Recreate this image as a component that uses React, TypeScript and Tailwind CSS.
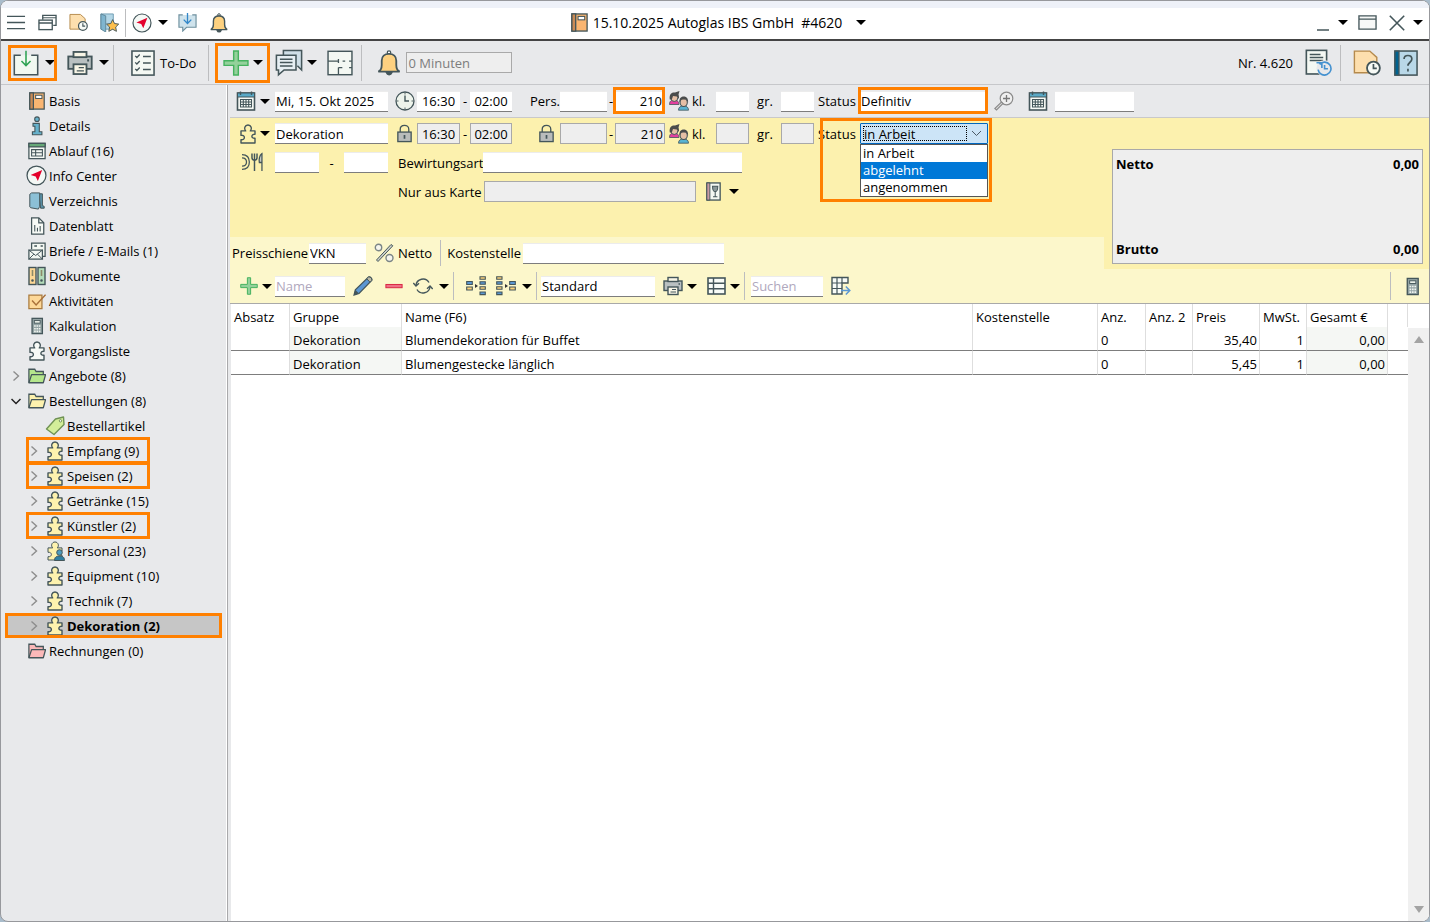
import React from "react";
import clsx from "clsx";

const INK = "#44565a";

type IconProps = { size?: number; className?: string };

function Svg({
  size = 20,
  className,
  children,
}: IconProps & { children: React.ReactNode }) {
  return (
    <svg
      width={size}
      height={size}
      viewBox="0 0 20 20"
      fill="none"
      stroke={INK}
      strokeWidth={1.4}
      aria-hidden="true"
      className={clsx("shrink-0", className)}
    >
      {children}
    </svg>
  );
}

function Arrow({ className }: { className?: string }) {
  return (
    <svg width="10" height="5" viewBox="0 0 10 5" aria-hidden="true" className={clsx("shrink-0", className)}>
      <path d="M0 0h10L5 5z" fill="#000" />
    </svg>
  );
}

const MenuIcon = (p: IconProps) => (
  <Svg {...p}>
    <path d="M0 3.5h19M0 10h19M0 16.500h19" />
  </Svg>
);

const WindowsIcon = (p: IconProps) => (
  <Svg {...p}>
    <path d="M5 7V2.5h14V13h-3" />
    <path d="M5 5h14" strokeWidth={1} />
    <rect x="1" y="7.5" width="14" height="10" fill="#fff" />
    <path d="M1 10.5h14" />
  </Svg>
);

const NoteClockIcon = (p: IconProps) => (
  <Svg {...p}>
    <path d="M1 1.5h11l5 4.500v11H1z" fill="#fddfae" stroke="#b58a4c" strokeWidth={1} />
    <circle cx="14.6" cy="13.6" r="4.6" fill="#f7faf6" strokeWidth={1.3} />
    <path d="M14.6 10.8v3h2.4" strokeWidth={1.2} />
  </Svg>
);

const StarBookIcon = (p: IconProps) => (
  <Svg {...p}>
    <path d="M1 1h13v16H1z" fill="#b3d6e6" stroke="#6f9db3" strokeWidth={1} />
    <path d="M1 1l5 2v17l-5-3z" fill="#7fb5cf" stroke="#5f8799" strokeWidth={1} />
    <path
      d="M13.3 7l2 4.1 4.4.6-3.2 3.1.8 4.5-4-2.2-4 2.2.8-4.5-3.2-3.1 4.4-.6z"
      fill="#fdbf4d"
      strokeWidth={1}
    />
  </Svg>
);

const CompassIcon = (p: IconProps) => (
  <Svg {...p}>
    <circle cx="10" cy="10" r="9" fill="#f4f8f5" strokeWidth={1.2} />
    <path d="M15.4 4.8L11.3 15.2 9.2 11 4.4 9.5z" fill="#e4002b" stroke="none" />
  </Svg>
);

const ChatInIcon = (p: IconProps) => (
  <Svg {...p}>
    <path d="M5 2H1v13h4v4l4-4h10V2h-4" fill="#cfe3ec" stroke="#6d8f9d" strokeWidth={1.2} />
    <path d="M10 0v10M6 7l4 4 4-4" stroke="#3287c9" />
  </Svg>
);

const BellIcon = (p: IconProps) => (
  <Svg {...p}>
    <path d="M8.2 17.5a2 2 0 003.8 0z" fill="#f2b84b" />
    <circle cx="10" cy="2" r="1.3" fill="#fff" strokeWidth={1} />
    <path
      d="M1.8 16.6c2-1 2.6-2.4 2.6-5.1V8.2C4.4 5 6.6 3 10 3s5.6 2 5.6 5.2v3.3c0 2.7.6 4.1 2.6 5.1z"
      fill="#fdd180"
    />
  </Svg>
);

const BookIcon = (p: IconProps) => (
  <Svg {...p}>
    <rect x="2" y="1" width="16" height="18" fill="#f9b571" />
    <path d="M2 1h4v18H2z" fill="#c98a55" />
    <rect x="8.5" y="3.6" width="7" height="3.6" fill="#fff" strokeWidth={1.1} />
  </Svg>
);

const InfoIcon = (p: IconProps) => (
  <Svg {...p}>
    <circle cx="10" cy="3.2" r="2.3" fill="#67b2cc" strokeWidth={1.1} />
    <path d="M6 7.4h6.3v8.4h2.6v3H5.4v-3h2.5v-5.5H6z" fill="#67b2cc" strokeWidth={1.1} />
  </Svg>
);

const PlanIcon = (p: IconProps) => (
  <Svg {...p}>
    <rect x="1" y="1.5" width="18" height="17" fill="#f4f8f3" />
    <path d="M1 1.5h18v4H1z" fill="#65a877" />
    <path d="M4 8.5h12v7H4zM4 12h12M8.5 8.5v7" strokeWidth={1.2} />
  </Svg>
);

const DirectoryIcon = (p: IconProps) => (
  <Svg {...p}>
    <path d="M12 2h4v13l2 1v2h-4z" fill="#5a93ab" strokeWidth={1.1} />
    <path d="M2 2.5L4 1h9v15l-1.5 3L3 17.5l-1-1z" fill="#8cc0d6" strokeWidth={1.1} />
  </Svg>
);

const SheetIcon = (p: IconProps) => (
  <Svg {...p}>
    <path d="M4 1h8l5.5 5.5V19H4z" fill="#f7faf6" />
    <path d="M12 1v5.5h5.5" />
    <path d="M7.5 16V9M10.5 16v-4M13.5 16v-6" strokeWidth={1.2} />
  </Svg>
);

const MailIcon = (p: IconProps) => (
  <Svg {...p}>
    <path d="M4 8V1.2h15V16h-3" fill="#f4f8f3" />
    <path d="M7 4.5h3M14 4.5h2.5" strokeWidth={1.8} />
    <rect x="1" y="9" width="15" height="10" fill="#f4f8f3" />
    <path d="M1 9l7.5 6L16 9M1 19l5.5-5.5M16 19l-5.5-5.5" strokeWidth={1.1} />
  </Svg>
);

const BindersIcon = (p: IconProps) => (
  <Svg {...p}>
    <rect x="2" y="1.5" width="7" height="17" fill="#fcd795" />
    <rect x="11" y="1.5" width="7" height="17" fill="#b4dcb9" />
    <path d="M5.5 4v6M14.5 4v6" strokeWidth={1.6} stroke="#8d8a68" />
    <circle cx="5.5" cy="14.5" r=".6" />
    <circle cx="14.5" cy="14.5" r=".6" />
  </Svg>
);

const TaskIcon = (p: IconProps) => (
  <Svg {...p}>
    <path d="M1 3.5h14.5v15H1z" fill="#fdd898" stroke="#a97b3f" />
    <path d="M4.5 9.5l4.500 5L19.5 3" stroke="#a9713a" strokeWidth={1.6} />
  </Svg>
);

const CalculatorIcon = (p: IconProps) => (
  <Svg {...p}>
    <rect x="4.5" y="1.5" width="11.5" height="17" fill="#93a3a4" />
    <rect x="7" y="4" width="6.5" height="2.8" fill="#edf3ec" strokeWidth={1} />
    <path
      d="M6.8 10h1.8M9.4 10h1.8M12 10h1.8M6.8 13h1.8M9.4 13h1.8M12 13h1.8M6.8 16h1.8M9.4 16h1.8M12 16h1.8"
      stroke="#f0f4ef"
      strokeWidth={1.8}
    />
  </Svg>
);

const PUZZLE =
  "M7.7 6.9C5.6 4.9 6.7 1 10 1s4.4 3.900 2.300 5.900H17v3.300c-4-.4-4.300 4.400 0 4V19H3v-3.300c4.500.6 4.500-5 0-4.400V6.900z";

const PuzzleIcon = ({ fill = "#fdf2ae", ...p }: IconProps & { fill?: string }) => (
  <Svg {...p}>
    <path d={PUZZLE} fill={fill} strokeLinejoin="round" />
  </Svg>
);

const PuzzlePersonIcon = (p: IconProps) => (
  <Svg {...p}>
    <path d={PUZZLE} fill="#fdf2ae" strokeWidth={1} strokeLinejoin="round" />
    <circle cx="14.5" cy="11.5" r="2.8" fill="#4c9cc0" strokeWidth={1} />
    <path d="M9.5 19.5c0-3.500 2-4.500 5-4.500s5 1 5 4.500z" fill="#2f7fa3" strokeWidth={1} />
  </Svg>
);

const FolderIcon = ({ fill = "#fdf2ae", ...p }: IconProps & { fill?: string }) => (
  <Svg {...p}>
    <path d="M1 17.5V2.5h6.500l1.500 2.500H17v3.500" fill={fill} />
    <path d="M1 17.5L4 8.500h15.500L17 17.500z" fill={fill} strokeLinejoin="round" />
  </Svg>
);

const TagIcon = (p: IconProps) => (
  <Svg {...p}>
    <path d="M10.5 3L18.500 1l.5 7.500-10 10L1.500 13z" fill="#d3ee99" stroke="#6f9254" strokeLinejoin="round" />
    <circle cx="15.5" cy="4.8" r="1.2" fill="#fff" stroke="#6f9254" strokeWidth={1} />
  </Svg>
);

const InboxIcon = (p: IconProps) => (
  <Svg {...p}>
    <path d="M6 4H1v15h18V4h-5" fill="#f1f8f1" strokeWidth={1.2} />
    <path d="M10 .5v11M6.500 8.500L10 12l3.500-3.500" stroke="#2fa354" strokeWidth={1.2} />
  </Svg>
);

const PrinterIcon = (p: IconProps) => (
  <Svg {...p}>
    <rect x="1" y="5" width="18" height="9.5" fill="#b9c0c1" />
    <rect x="5" y="1.5" width="10" height="4" fill="#f8f5e6" />
    <path d="M15.500 8h1.500" strokeWidth={1.6} />
    <rect x="5" y="11" width="10" height="7.5" fill="#f8f5e6" />
    <path d="M9 13.500h4M7.500 16h5.500" strokeWidth={1} />
  </Svg>
);

const ChecklistIcon = (p: IconProps) => (
  <Svg {...p}>
    <rect x="1.5" y=".8" width="17" height="18.5" fill="#f4f8f3" strokeWidth={1.2} />
    <path
      d="M4 4.500l1.300 1.300L7.500 3.500M4 9.500l1.300 1.300L7.500 8.500M4 14.500l1.300 1.300 2.200-2.300M10 5h6M10 10h6M10 15h6"
      strokeWidth={1}
    />
  </Svg>
);

const PlusIcon = (p: IconProps) => (
  <Svg {...p}>
    <path
      d="M8.200.8h3.600v7.400h7.400v3.600h-7.400v7.400H8.200v-7.400H.8V8.200h7.400z"
      fill="#94d19b"
      stroke="#45b25f"
      strokeWidth={1.1}
    />
  </Svg>
);

const ChatsIcon = (p: IconProps) => (
  <Svg {...p}>
    <path d="M6 5V1h13v14l-3-3" fill="#cfdfe7" strokeWidth={1.1} />
    <path d="M1 4.500h14V15H6.500l-4 3.500V15H1z" fill="#e6eff3" strokeWidth={1.1} />
    <path d="M3.500 7.300h9M3.500 9.700h9M3.500 12.200h9" strokeWidth={1.1} />
  </Svg>
);

const FloorIcon = (p: IconProps) => (
  <Svg {...p}>
    <rect x=".8" y="1" width="18.400" height="18" fill="#f4f8f3" strokeWidth={1.1} />
    <path d="M.8 8.500h8M8.800 7v3M12 8.500h2M17 8.500h2.200M8.800 19v-5.500M8.800 13.500h3M17 13.500h2.200" strokeWidth={1} />
  </Svg>
);

const HistoryIcon = (p: IconProps) => (
  <Svg {...p}>
    <rect x="1" y="1" width="15" height="17.500" fill="#f4f8f3" strokeWidth={1.2} />
    <path d="M3.500 4h8M3.500 6.300h10M3.500 8.600h10" strokeWidth={1.1} />
    <circle cx="14.500" cy="14.300" r="6" fill="#e8e9eb" stroke="none" />
    <path d="M10.800 11.400a4.800 4.800 0 11-1.100 3.900M8.500 10.200l4-.2v4" stroke="#4592d0" strokeWidth={1.2} />
    <path d="M14.500 11.800v2.800H17" stroke="#4592d0" strokeWidth={1.2} />
  </Svg>
);

const HelpIcon = (p: IconProps) => (
  <Svg {...p}>
    <rect x="1.500" y=".8" width="17" height="18.500" fill="#b9d8e8" strokeWidth={1.2} />
    <path d="M1.500.8h3.100v18.500H1.500z" fill="#00628f" strokeWidth={1} />
    <path d="M8.500 7C8.500 3.300 14.500 3.300 14.500 7c0 2.400-3 2.500-3 5.200M11.500 14.500v2" strokeWidth={1.3} />
  </Svg>
);

const CalendarIcon = (p: IconProps) => (
  <Svg {...p}>
    <rect x="1.500" y="2" width="17" height="17" fill="#f7faf6" strokeWidth={1.6} />
    <path d="M1.500 2h17v4h-17z" fill="#5aa9c6" strokeWidth={1} />
    <path d="M4.500.5V4M15.500.5V4" />
    <path
      d="M4.500 8.500h11V16h-11zM4.500 11h11M4.500 13.500h11M7.300 8.500V16M10 8.500V16M12.700 8.500V16"
      strokeWidth={1.1}
    />
  </Svg>
);

const ClockIcon = (p: IconProps) => (
  <Svg {...p}>
    <circle cx="10" cy="10" r="9" fill="#eef4ec" strokeWidth={1.3} />
    <path d="M10 4.500V10h4" />
    <path d="M10 1.500v2M10 16.500v2M1.500 10h2M16.500 10h2" strokeWidth={0.9} />
  </Svg>
);

const LockIcon = (p: IconProps) => (
  <Svg {...p}>
    <path d="M5.500 8.500v-3c0-5.500 9-5.500 9 0v3" />
    <rect x="3" y="8.500" width="14" height="10" fill="#b9bcbb" />
    <path d="M10 11.500v4" strokeWidth={1.8} />
  </Svg>
);

const PeopleIcon = (p: IconProps) => (
  <Svg {...p}>
    <path d="M.5 13.500c0-3.500 2-4.500 4.500-4.500s5 1 5 4.500z" fill="#e3409f" strokeWidth={0.8} />
    <ellipse cx="5.300" cy="6.500" rx="3.600" ry="4" fill="#e5bfa5" strokeWidth={1} />
    <path
      d="M.8 8.500C0 3 2.500 1 6 1.500L10.500 0 9.500 3.500c.6 2 .5 3 .5 4.500L7.800 5.500 4 5 2.800 8.500z"
      fill="#4a4c4c"
      stroke="none"
    />
    <path d="M9.500 19.200c0-3.200 2-4.200 5-4.200s5 1 5 4.200z" fill="#58b3d2" strokeWidth={0.8} />
    <ellipse cx="14.700" cy="11.500" rx="3.600" ry="4" fill="#e5bfa5" strokeWidth={1.1} />
    <path d="M10.300 11.500C10 7 12.500 5.500 14.700 5.500s4.800 1.500 4.400 6L17 8.500h-4.500z" fill="#4a4c4c" stroke="none" />
  </Svg>
);

const ZoomIcon = (p: IconProps) => (
  <Svg {...p}>
    <circle cx="12.500" cy="7.500" r="6.300" fill="#efefef" stroke="#8b8b8b" strokeWidth={1.2} />
    <path d="M12.500 4v7M9 7.500h7" stroke="#777" strokeWidth={1.3} />
    <path d="M7.500 11L9 12.500 2.500 19 .8 17.500z" fill="#ddd" stroke="#8b8b8b" strokeWidth={1.1} />
  </Svg>
);

const CutleryIcon = (p: IconProps) => (
  <Svg {...p}>
    <path d="M0 2.500c5 0 7 3 7 7s-2 7-7 7M0 5.500c3 0 4.300 1.500 4.300 4s-1.300 4-4.300 4" strokeWidth={1.2} />
    <path d="M9.500 1.500v4c0 3 4.800 3 4.800 0v-4M11.900 1.500V18" />
    <path d="M19 18V1.500c-2.500 1.500-3 6-2.500 8.500H19" fill="#c7cac6" strokeWidth={1.2} />
  </Svg>
);

const WineCardIcon = (p: IconProps) => (
  <Svg {...p}>
    <rect x="3" y="1" width="14" height="18" fill="#f4f8f3" />
    <path d="M3 1h3.200v18H3z" fill="#c99aa5" strokeWidth={1} />
    <path
      d="M9 4.500h5.500c0 5-1 5.500-2.700 5.500S9 9.500 9 4.500zM11.800 10v5M9.500 15.500h4.600"
      fill="#8a9799"
      strokeWidth={1.1}
    />
  </Svg>
);

const PercentIcon = (p: IconProps) => (
  <Svg {...p}>
    <path d="M17 1.500l1.800 1.300L4 18.500 2.500 17z" fill="#cfd2cb" strokeWidth={1} />
    <circle cx="4.500" cy="4.500" r="3.200" fill="#f6f6ee" stroke="#7b8586" />
    <circle cx="15.500" cy="15" r="3.500" fill="#f6f6ee" stroke="#7b8586" />
  </Svg>
);

const PencilIcon = (p: IconProps) => (
  <Svg {...p}>
    <path d="M15.500 1c2-.5 4 1.500 3.200 3.500L6 17.500 1 19l1.300-5.200z" fill="#5b97d3" strokeWidth={1.2} />
    <path d="M15.500 1c2-.5 4 1.500 3.200 3.500L17 6.200l-3.300-3.500z" fill="#b9b8a6" strokeWidth={1} />
    <path d="M2.300 13.800L6 17.500 1 19z" fill={INK} stroke="none" />
  </Svg>
);

const MinusIcon = (p: IconProps) => (
  <Svg {...p}>
    <rect x="1" y="8.300" width="18" height="3.600" fill="#ef7086" stroke="#d92744" strokeWidth={1.1} />
  </Svg>
);

const RefreshIcon = (p: IconProps) => (
  <Svg {...p}>
    <path d="M3 9.500a7 7 0 0113-3M17 10.500a7 7 0 01-13 3" />
    <path d="M.3 7L3 10l3-2.700M19.700 13L17 10l-3 2.700" />
  </Svg>
);

const BlocksIcon = ({ mirrored, ...p }: IconProps & { mirrored?: boolean }) => (
  <Svg {...p}>
    <g transform={mirrored ? "matrix(-1 0 0 1 20 0)" : undefined} strokeWidth={1.1}>
      <path d="M.7 5.500h5.600v3H.7z" fill="#5b97d3" />
      <path d="M.7 11h5.600v3H.7z" fill="#fcd27a" />
      <path d="M14 .7h5.300v2.600H14zM14 10.700h5.300v2.600H14z" fill="#fcd27a" />
      <path d="M14 5.700h5.300v2.600H14zM14 16h5.300v2.600H14z" fill="#5b97d3" />
    </g>
    <path d="M9 8l3 2-3 2z" fill="#333" stroke="none" />
  </Svg>
);

const GridIcon = (p: IconProps) => (
  <Svg {...p}>
    <rect x="1" y="2" width="17" height="16" fill="#f8fbf7" strokeWidth={1.6} />
    <path d="M1 7.300h17M1 12.700h17M6.500 2v16" />
  </Svg>
);

const GridExportIcon = (p: IconProps) => (
  <Svg {...p}>
    <path d="M1 1.500h16V7h-6v11H1z" fill="#f8fbf7" />
    <path d="M1 7h10M1 12.500h10M6 1.500V18M11 1.500V7" strokeWidth={1.2} />
    <path d="M10 14.500h8.500M14.800 10.500l4 4-4 4" stroke="#5b97d3" strokeWidth={1.5} />
  </Svg>
);

const Chevron = ({ open }: { open?: boolean }) =>
  open ? (
    <svg width="10" height="10" viewBox="0 0 10 10" fill="none" stroke="#222" strokeWidth="1.500" aria-hidden="true">
      <path d="M.5 3L5 7.500 9.500 3" />
    </svg>
  ) : (
    <svg width="10" height="10" viewBox="0 0 10 10" fill="none" stroke="#8d8d8d" strokeWidth="1.400" aria-hidden="true">
      <path d="M2.500.5L7.500 5l-5 4.500" />
    </svg>
  );

function Divider({ className }: { className?: string }) {
  return <span className={clsx("w-px shrink-0 bg-[#bcbdbf]", className)} />;
}

function IconButton({
  label,
  className,
  children,
}: {
  label: string;
  className?: string;
  children: React.ReactNode;
}) {
  return (
    <button type="button" aria-label={label} className={clsx("flex shrink-0 items-center", className)}>
      {children}
    </button>
  );
}

function Field({ className, ...props }: React.InputHTMLAttributes<HTMLInputElement>) {
  return (
    <input
      type="text"
      className={clsx(
        "h-[21px] min-w-0 shrink-0 border-t border-b border-t-[#ececec] border-b-[#7d7d7d] bg-white px-px outline-none placeholder:text-[#b0a8bd]",
        className,
      )}
      {...props}
    />
  );
}

function LockedField({ className, ...props }: React.InputHTMLAttributes<HTMLInputElement>) {
  return (
    <input
      type="text"
      readOnly
      className={clsx("h-[21px] min-w-0 shrink-0 border border-[#a9a9a9] bg-[#eeeeee] px-px outline-none", className)}
      {...props}
    />
  );
}

function Highlight({ className }: { className: string }) {
  return <span className={clsx("pointer-events-none absolute z-10 border-3 border-[#ff8000]", className)} />;
}

type TreeItem = {
  label: string;
  icon: React.ReactNode;
  child?: boolean;
  expandable?: boolean;
  open?: boolean;
  marked?: boolean;
  active?: boolean;
};

const tree: TreeItem[] = [
  { label: "Basis", icon: <BookIcon size={18} /> },
  { label: "Details", icon: <InfoIcon /> },
  { label: "Ablauf (16)", icon: <PlanIcon size={18} /> },
  { label: "Info Center", icon: <CompassIcon size={21} /> },
  { label: "Verzeichnis", icon: <DirectoryIcon size={18} /> },
  { label: "Datenblatt", icon: <SheetIcon size={18} /> },
  { label: "Briefe / E-Mails (1)", icon: <MailIcon size={18} /> },
  { label: "Dokumente", icon: <BindersIcon /> },
  { label: "Aktivitäten", icon: <TaskIcon size={18} /> },
  { label: "Kalkulation", icon: <CalculatorIcon size={18} /> },
  { label: "Vorgangsliste", icon: <PuzzleIcon fill="#f7faf6" /> },
  { label: "Angebote (8)", icon: <FolderIcon size={18} fill="#b5e78c" />, expandable: true },
  { label: "Bestellungen (8)", icon: <FolderIcon size={18} />, expandable: true, open: true },
  { label: "Bestellartikel", icon: <TagIcon />, child: true },
  { label: "Empfang (9)", icon: <PuzzleIcon />, child: true, expandable: true, marked: true },
  { label: "Speisen (2)", icon: <PuzzleIcon />, child: true, expandable: true, marked: true },
  { label: "Getränke (15)", icon: <PuzzleIcon />, child: true, expandable: true },
  { label: "Künstler (2)", icon: <PuzzleIcon />, child: true, expandable: true, marked: true },
  { label: "Personal (23)", icon: <PuzzlePersonIcon />, child: true, expandable: true },
  { label: "Equipment (10)", icon: <PuzzleIcon />, child: true, expandable: true },
  { label: "Technik (7)", icon: <PuzzleIcon />, child: true, expandable: true },
  { label: "Dekoration (2)", icon: <PuzzleIcon />, child: true, expandable: true, active: true },
  { label: "Rechnungen (0)", icon: <FolderIcon size={18} fill="#fbb9b9" /> },
];

const positions = [
  { group: "Dekoration", name: "Blumendekoration für Buffet", count: "0", price: "35,40", vat: "1", total: "0,00" },
  { group: "Dekoration", name: "Blumengestecke länglich", count: "0", price: "5,45", vat: "1", total: "0,00" },
];

function TitleBar() {
  return (
    <header className="grid h-[38px] grid-cols-[1fr_auto_1fr] items-center border-t-7 border-[#eef1f8] bg-white pb-0.5">
      <div className="flex items-center pl-1.5">
        <div className="flex gap-3">
          <IconButton label="Menü"><MenuIcon size={19} /></IconButton>
          <IconButton label="Fenster"><WindowsIcon size={19} /></IconButton>
          <IconButton label="Notiz"><NoteClockIcon size={19} /></IconButton>
          <IconButton label="Favoriten"><StarBookIcon size={19} /></IconButton>
        </div>
        <Divider className="mx-1.5 h-7" />
        <IconButton label="Info Center"><CompassIcon /><Arrow className="ml-1.5" /></IconButton>
        <IconButton label="Nachrichten" className="ml-2.5"><ChatInIcon size={19} /></IconButton>
        <IconButton label="Erinnerungen" className="ml-3"><BellIcon /></IconButton>
      </div>
      <button type="button" className="flex items-center pl-1.5">
        <BookIcon size={19} />
        <span className="ml-1 text-[14px] whitespace-pre">15.10.2025 Autoglas IBS GmbH  #4620</span>
        <Arrow className="ml-3.5" />
      </button>
      <div className="flex items-center justify-end pr-1.5">
        <IconButton label="Minimieren">
          <svg width="14" height="20" viewBox="0 0 14 20" stroke={INK} strokeWidth="1.400" aria-hidden="true">
            <path d="M1 17h12" />
          </svg>
          <Arrow className="ml-2" />
        </IconButton>
        <IconButton label="Wiederherstellen" className="ml-2.5">
          <Svg size={19}><path d="M1 3h18v14H1zM1 6.500h18" fill="#f7f8f7" /></Svg>
        </IconButton>
        <IconButton label="Schließen" className="ml-3">
          <Svg size={16}><path d="M1 1l18 18M19 1L1 19" strokeWidth={2} /></Svg>
          <Arrow className="ml-2" />
        </IconButton>
      </div>
    </header>
  );
}

function MainToolbar() {
  return (
    <div className="flex h-[46px] items-center border-t-2 border-b border-t-[#444444] border-b-[#c6c7ca] pl-3">
      <div className="relative flex items-center">
        <IconButton label="Speichern"><InboxIcon size={26} /></IconButton>
        <IconButton label="Weitere Speicheroptionen" className="ml-1.5"><Arrow /></IconButton>
        <Highlight className="-inset-y-[5px] -right-0.5 -left-[5px]" />
      </div>
      <IconButton label="Drucken" className="ml-3"><PrinterIcon size={26} /><Arrow className="ml-1.5" /></IconButton>
      <Divider className="ml-1 h-9" />
      <button type="button" className="ml-4 flex items-center gap-1">
        <ChecklistIcon size={26} />
        To-Do
      </button>
      <Divider className="ml-3 h-9" />
      <div className="relative ml-3.5 flex items-center">
        <IconButton label="Neu"><PlusIcon size={26} /></IconButton>
        <IconButton label="Weitere Elemente" className="ml-1"><Arrow /></IconButton>
        <Highlight className="-inset-y-[7px] -right-[7px] -left-2" />
      </div>
      <IconButton label="Kommentare" className="ml-3"><ChatsIcon size={28} /><Arrow className="ml-1" /></IconButton>
      <IconButton label="Raumplan" className="ml-2.5"><FloorIcon size={26} /></IconButton>
      <Divider className="ml-2 h-9" />
      <IconButton label="Erinnerung" className="ml-3.5"><BellIcon size={26} /></IconButton>
      <LockedField aria-label="Erinnerung in Minuten" defaultValue="0 Minuten" className="ml-1 w-[106px] text-[#7d7d7d]" />
      <div className="ml-auto flex items-center pr-2.5">
        <span>Nr. 4.620</span>
        <IconButton label="Verlauf" className="ml-3"><HistoryIcon size={27} /></IconButton>
        <Divider className="ml-2 h-9" />
        <IconButton label="Notiz anlegen" className="ml-3"><NoteClockIcon size={28} /></IconButton>
        <IconButton label="Hilfe" className="ml-3"><HelpIcon size={26} /></IconButton>
      </div>
    </div>
  );
}

function Sidebar() {
  return (
    <nav aria-label="Vorgang" className="w-[226px] shrink-0 border-r border-white pt-[3px]">
      <ul>
        {tree.map((item) => (
          <li
            key={item.label}
            className={clsx("relative flex h-[25px] items-center", item.active && "bg-[#c6c6c6] bg-clip-content px-1.5")}
          >
            <button
              type="button"
              className={clsx(
                "flex h-full w-full items-center",
                item.child ? (item.active ? "pl-[22px]" : "pl-7") : "pl-2.5",
                item.active && "font-bold",
              )}
            >
              <span className="flex w-[15px] shrink-0 items-center">{item.expandable && <Chevron open={item.open} />}</span>
              <span className="mr-0.5 flex w-[21px] shrink-0 justify-center">{item.icon}</span>
              {item.label}
            </button>
            {item.marked && <Highlight className="-inset-y-px left-[25px] w-[124px]" />}
            {item.active && <Highlight className="inset-y-0 right-1 left-1" />}
          </li>
        ))}
      </ul>
    </nav>
  );
}

// shared by the event row and the order row so that their fields line up
const FORM_GRID =
  "grid grid-cols-[24px_15px_113px_29px_43px_10px_42px_48px_47px_8px_50px_27px_24px_33px_32px_33px_46px_128px_32px_35px_79px] items-center pl-1.5";

function EventRow() {
  return (
    <div className={clsx(FORM_GRID, "h-[33px] border-b border-[#c9c9c9]")}>
      <IconButton label="Kalender"><CalendarIcon /></IconButton>
      <IconButton label="Datum wählen"><Arrow /></IconButton>
      <Field aria-label="Datum" defaultValue="Mi, 15. Okt 2025" />
      <span className="flex justify-center pl-1"><ClockIcon /></span>
      <Field aria-label="Beginn" defaultValue="16:30" className="text-center" />
      <span className="text-center">-</span>
      <Field aria-label="Ende" defaultValue="02:00" className="text-center" />
      <label htmlFor="pers" className="text-right">Pers.</label>
      <Field id="pers" />
      <span className="text-center">-</span>
      <span className="relative flex">
        <Field aria-label="Personen bis" defaultValue="210" className="w-full pr-[3px] text-right" />
        <Highlight className="-top-1 right-0 -bottom-0.5 -left-0.5" />
      </span>
      <span className="flex justify-center"><PeopleIcon /></span>
      <label htmlFor="kl">kl.</label>
      <Field id="kl" />
      <label htmlFor="gr" className="text-center">gr.</label>
      <Field id="gr" />
      <label htmlFor="status" className="text-center">Status</label>
      <span className="relative flex">
        <Field id="status" defaultValue="Definitiv" className="w-full" />
        <Highlight className="-top-1 right-0 -bottom-0.5 -left-0.5" />
      </span>
      <IconButton label="Suchen" className="justify-center"><ZoomIcon /></IconButton>
      <IconButton label="Optionsdatum wählen" className="justify-center"><CalendarIcon /></IconButton>
      <Field aria-label="Optionsdatum" />
    </div>
  );
}

function StatusSelect() {
  return (
    <div className="relative col-span-2 grid grid-cols-[46px_128px] items-center">
      <label htmlFor="order-status" className="text-center">Status</label>
      <div className="relative">
        <select
          id="order-status"
          defaultValue="in Arbeit"
          className="block h-[21px] w-full appearance-none rounded-[1px] border border-[#0067c0] bg-[#cce4f7] pl-[3px] outline-none"
        >
          <option>in Arbeit</option>
          <option>abgelehnt</option>
          <option>angenommen</option>
        </select>
        <span className="pointer-events-none absolute inset-y-[3px] right-[21px] left-[3px] border border-dotted border-black" />
        <svg
          width="11"
          height="7"
          viewBox="0 0 11 7"
          fill="none"
          stroke="#4c5a66"
          aria-hidden="true"
          className="pointer-events-none absolute top-[7px] right-1.5"
        >
          <path d="M1 1l4.500 4.500L10 1" />
        </svg>
        <ul
          role="listbox"
          aria-label="Status"
          className="absolute inset-x-0 top-full z-10 border border-[#555555] bg-white leading-[17px]"
        >
          <li role="option" aria-selected="false" className="px-0.5">in Arbeit</li>
          <li role="option" aria-selected="true" className="bg-[#0078d7] px-0.5 text-white">abgelehnt</li>
          <li role="option" aria-selected="false" className="px-0.5">angenommen</li>
        </ul>
      </div>
      <Highlight className="-top-[5px] -right-1 -bottom-[58px] left-1.5" />
    </div>
  );
}

function OrderForm() {
  return (
    <div className="flex bg-[#fcf1ae]">
      <div className="flex min-w-0 flex-1 flex-col">
        <div className="flex flex-1 flex-col gap-2 pt-[5px]">
          <div className={FORM_GRID}>
            <IconButton label="Abteilung"><PuzzleIcon fill="none" className="ml-0.5" /></IconButton>
            <IconButton label="Abteilung wählen"><Arrow /></IconButton>
            <Field aria-label="Abteilung" defaultValue="Dekoration" />
            <IconButton label="Zeit sperren" className="justify-center pl-1"><LockIcon size={19} /></IconButton>
            <LockedField aria-label="Beginn gesperrt" defaultValue="16:30" className="text-center" />
            <span className="text-center">-</span>
            <LockedField aria-label="Ende gesperrt" defaultValue="02:00" className="text-center" />
            <IconButton label="Personen sperren" className="justify-center pl-5"><LockIcon size={19} /></IconButton>
            <LockedField aria-label="Personen von" />
            <span className="text-center">-</span>
            <LockedField aria-label="Personen bis gesperrt" defaultValue="210" className="text-right" />
            <span className="flex justify-center"><PeopleIcon /></span>
            <label htmlFor="order-kl">kl.</label>
            <LockedField id="order-kl" />
            <label htmlFor="order-gr" className="text-center">gr.</label>
            <LockedField id="order-gr" />
            <StatusSelect />
          </div>
          <div className="flex items-center pl-3">
            <CutleryIcon size={21} />
            <Field aria-label="Bewirtung von" className="ml-3 w-11" />
            <span className="w-[25px] text-center">-</span>
            <Field aria-label="Bewirtung bis" className="w-11" />
            <label htmlFor="catering" className="ml-2.5 w-[85px] whitespace-nowrap">Bewirtungsart</label>
            <Field id="catering" className="w-[259px]" />
          </div>
          <div className="flex items-center pl-[168px]">
            <label htmlFor="card" className="w-[86px] whitespace-nowrap">Nur aus Karte</label>
            <LockedField id="card" className="w-[212px]" />
            <IconButton label="Karte wählen" className="ml-2"><WineCardIcon size={19} /><Arrow className="ml-1.5" /></IconButton>
          </div>
        </div>
        <div className="flex h-8 items-center bg-[#fcf7cb] pl-0.5">
          <label htmlFor="price-track" className="w-[77px] whitespace-nowrap">Preisschiene</label>
          <Field id="price-track" defaultValue="VKN" className="w-[57px]" />
          <button type="button" className="ml-2 flex items-center gap-1"><PercentIcon />Netto</button>
          <Divider className="ml-2 h-[26px]" />
          <label htmlFor="cost-centre" className="ml-1.5 w-[76px] whitespace-nowrap">Kostenstelle</label>
          <Field id="cost-centre" className="w-[201px]" />
        </div>
      </div>
      <aside className="w-[325px] shrink-0 pt-[31px] pr-1.5 pb-[5px] pl-2">
        <dl className="flex h-[115px] flex-col justify-between border border-[#a9a9a9] bg-[#eeeeee] px-[3px] py-[5px] font-bold">
          <div className="flex justify-between"><dt>Netto</dt><dd>0,00</dd></div>
          <div className="flex justify-between"><dt>Brutto</dt><dd>0,00</dd></div>
        </dl>
      </aside>
    </div>
  );
}

function ListToolbar() {
  return (
    <div className="flex h-[35px] items-center border-b border-[#a9a9a9] bg-[#fcf7cb] pr-[7px] pl-2.5">
      <IconButton label="Position hinzufügen"><PlusIcon size={18} /><Arrow className="ml-1" /></IconButton>
      <Field aria-label="Name" placeholder="Name" className="ml-[3px] w-[70px]" />
      <IconButton label="Bearbeiten" className="ml-2"><PencilIcon /></IconButton>
      <IconButton label="Entfernen" className="ml-3"><MinusIcon size={18} /></IconButton>
      <IconButton label="Aktualisieren" className="ml-2.5"><RefreshIcon /><Arrow className="ml-1.5" /></IconButton>
      <Divider className="ml-1 h-7" />
      <IconButton label="Einfügen" className="ml-3"><BlocksIcon /></IconButton>
      <IconButton label="Herauslösen" className="ml-2.5"><BlocksIcon mirrored /><Arrow className="ml-1.5" /></IconButton>
      <Divider className="ml-1 h-7" />
      <Field aria-label="Ansicht" defaultValue="Standard" className="ml-1 w-[114px]" />
      <IconButton label="Liste drucken" className="ml-2"><PrinterIcon /><Arrow className="ml-1" /></IconButton>
      <IconButton label="Spalten" className="ml-2.5"><GridIcon /><Arrow className="ml-[3px]" /></IconButton>
      <Divider className="ml-1 h-7" />
      <Field aria-label="Suchen" placeholder="Suchen" className="ml-1.5 w-[72px]" />
      <IconButton label="Exportieren" className="ml-2"><GridExportIcon /></IconButton>
      <Divider className="ml-auto h-7" />
      <IconButton label="Rechner" className="ml-3"><CalculatorIcon size={19} /></IconButton>
    </div>
  );
}

function PositionTable() {
  const head = "h-[23px] border-r border-[#dedede] pt-0.5 pl-[3px] text-left font-normal whitespace-nowrap";
  const cell = "h-6 border-r border-b border-r-[#dedede] border-b-[#7d7d7d] px-0.5 pt-0.5 whitespace-nowrap";

  return (
    <div className="ml-px flex flex-1 bg-white">
      <div className="flex-1">
        <table className="w-full table-fixed border-separate border-spacing-0">
          <colgroup>
            <col className="w-[59px]" />
            <col className="w-[112px]" />
            <col />
            <col className="w-[125px]" />
            <col className="w-[48px]" />
            <col className="w-[47px]" />
            <col className="w-[67px]" />
            <col className="w-[47px]" />
            <col className="w-[81px]" />
            <col className="w-[20px]" />
          </colgroup>
          <thead>
            <tr>
              <th className={head}>Absatz</th>
              <th className={head}>Gruppe</th>
              <th className={head}>Name (F6)</th>
              <th className={head}>Kostenstelle</th>
              <th className={head}>Anz.</th>
              <th className={head}>Anz. 2</th>
              <th className={head}>Preis</th>
              <th className={head}>MwSt.</th>
              <th className={head}>Gesamt €</th>
              <th className={head} />
            </tr>
          </thead>
          <tbody>
            {positions.map((row) => (
              <tr key={row.name}>
                <td className={cell} />
                <td className={clsx(cell, "bg-[#f5f7f4] pl-[3px]")}>{row.group}</td>
                <td className={clsx(cell, "pl-[3px]")}>{row.name}</td>
                <td className={cell} />
                <td className={clsx(cell, "pl-[3px]")}>{row.count}</td>
                <td className={cell} />
                <td className={clsx(cell, "text-right")}>{row.price}</td>
                <td className={clsx(cell, "text-right")}>{row.vat}</td>
                <td className={clsx(cell, "bg-[#f5f7f4] text-right")}>{row.total}</td>
                <td className="border-b border-[#7d7d7d]" />
              </tr>
            ))}
          </tbody>
        </table>
      </div>
      <div className="flex w-[21px] flex-col pt-6">
        <div className="flex flex-1 flex-col items-center justify-between bg-[#f0f0f0] py-2">
          <svg width="10" height="7" viewBox="0 0 10 7" aria-hidden="true"><path d="M5 0l5 7H0z" fill="#a3a3a3" /></svg>
          <svg width="10" height="7" viewBox="0 0 10 7" aria-hidden="true"><path d="M5 7l5-7H0z" fill="#a3a3a3" /></svg>
        </div>
      </div>
    </div>
  );
}

export default function App() {
  return (
    <div className="flex min-h-screen bg-[#a9bccb] font-['Open_Sans','Noto_Sans',sans-serif] text-[13px] leading-[18px] text-black">
      <div className="flex min-w-0 flex-1 flex-col overflow-hidden rounded-lg border border-[#97989c] bg-[#e8e9eb]">
        <TitleBar />
        <MainToolbar />
        <div className="flex flex-1">
          <Sidebar />
          <main className="flex min-w-0 flex-1 flex-col border-l border-[#a9a9ab] pl-0.5">
            <EventRow />
            <OrderForm />
            <ListToolbar />
            <PositionTable />
          </main>
        </div>
      </div>
    </div>
  );
}
